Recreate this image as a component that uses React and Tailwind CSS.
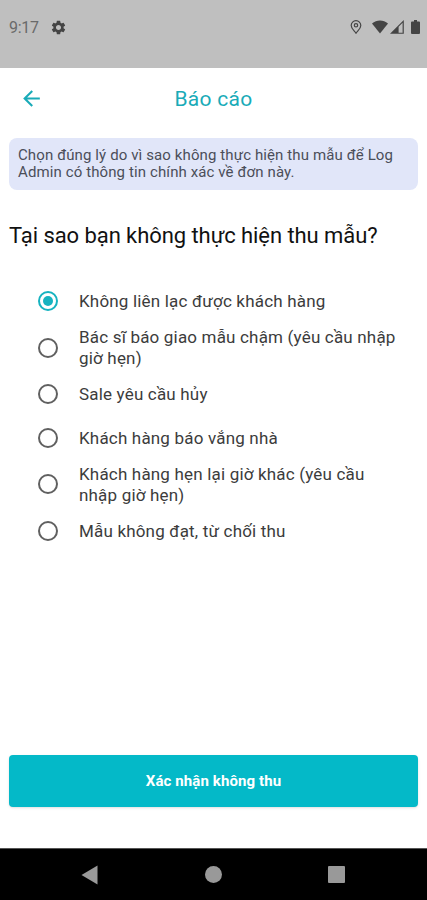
import React, { useState } from "react";
import clsx from "clsx";
import { MdArrowBack, MdSettings } from "react-icons/md";

const reasons = [
  { id: "unreachable", lines: ["Không liên lạc được khách hàng"] },
  {
    id: "doctor-delay",
    lines: ["Bác sĩ báo giao mẫu chậm (yêu cầu nhập", "giờ hẹn)"],
  },
  { id: "sale-cancel", lines: ["Sale yêu cầu hủy"] },
  { id: "not-home", lines: ["Khách hàng báo vắng nhà"] },
  {
    id: "reschedule",
    lines: ["Khách hàng hẹn lại giờ khác (yêu cầu", "nhập giờ hẹn)"],
  },
  { id: "rejected", lines: ["Mẫu không đạt, từ chối thu"] },
];

function StatusBar() {
  return (
    <div className="h-[67.5px] shrink-0 bg-[#bfbfbf] flex items-start justify-between pl-[9px] pr-[7.500px] pt-[18px] text-[#444]">
      <div className="flex items-center h-5">
        <span className="text-[16px] tracking-[-0.3px] text-[#6a6a6a]">
          9:17
        </span>
        <MdSettings className="ml-[11px] -mt-0.5 size-[17px]" />
      </div>
      <div className="flex items-center h-[18px]">
        <svg viewBox="0 0 12 14" className="w-3 h-3.5" fill="none" stroke="currentColor" strokeWidth="1.200">
          <path d="M6 13.200C4.600 10.800 1.200 8.800 1.200 5.500a4.800 4.800 0 0 1 9.600 0C10.800 8.800 7.400 10.800 6 13.200z" />
          <circle cx="6" cy="5.300" r="1.700" />
        </svg>
        <svg viewBox="0 0 16 14" className="ml-[10px] w-4 h-3.5" fill="currentColor">
          <path d="M0 3.500C4.600-.4 11.400-.4 16 3.500L8 13.500z" />
        </svg>
        <svg viewBox="0 0 14 14" className="ml-0.5 w-3.5 h-3.5" fill="currentColor">
          <path d="M0 13.800 13.800 0v13.800zM8.600 6.700v6h4V2.700z" fillRule="evenodd" />
        </svg>
        <svg viewBox="0 0 9 14" className="ml-[7px] w-[9px] h-3.5" fill="currentColor">
          <path d="M3 0h3v1.500h2q1 0 1 1V13q0 1-1 1H1q-1 0-1-1V2.500q0-1 1-1h2z" />
        </svg>
      </div>
    </div>
  );
}

function Header() {
  return (
    <header className="h-[62px] shrink-0 grid grid-cols-[62px_1fr_62px] items-center text-[#1aabb8]">
      <button className="flex justify-center" aria-label="Back">
        <MdArrowBack className="size-[25px]" />
      </button>
      <h1 className="pt-[2px] text-center text-[21px] tracking-[0.3px]">
        Báo cáo
      </h1>
    </header>
  );
}

function Radio({ checked }) {
  return (
    <span
      className={clsx(
        "-mt-px size-5 shrink-0 rounded-full border-2 flex items-center justify-center",
        checked ? "border-[#16b3c0]" : "border-[#606060]",
      )}
    >
      {checked && <span className="size-2.5 rounded-full bg-[#16b3c0]" />}
    </span>
  );
}

function NavigationBar() {
  return (
    <nav className="h-[52px] shrink-0 bg-black border-t border-[#555] grid grid-cols-[81px_18px_106px_18px_105px_18px] items-center text-[#999]">
      <svg viewBox="0 0 17 20" className="col-start-2 w-[17px] h-5" fill="currentColor">
        <path d="M0.500 10 16.500 0.500v19z" />
      </svg>
      <span className="col-start-4 size-[17px] rounded-full bg-[#999]" />
      <span className="col-start-6 size-[17px] rounded-[1px] bg-[#999]" />
    </nav>
  );
}

export default function App() {
  const [selected, setSelected] = useState("unreachable");

  return (
    <div className="h-screen flex flex-col bg-white font-['Roboto',sans-serif]">
      <StatusBar />
      <Header />
      <main className="flex-1 flex flex-col px-[9px] pt-2">
        <p className="h-[52px] rounded-lg bg-[#e1e6f9] px-[9px] pt-[9.500px] text-[15px] leading-[17px] tracking-[0.11px] text-[#4b4e59] whitespace-nowrap">
          Chọn đúng lý do vì sao không thực hiện thu mẫu để Log
          <br />
          Admin có thông tin chính xác về đơn này.
        </p>
        <h2 className="mt-8 text-[22px] leading-7 tracking-[-0.07px] text-[#111] whitespace-nowrap">
          Tại sao bạn không thực hiện thu mẫu?
        </h2>
        <div className="mt-[30.500px] pl-[29px]" role="radiogroup">
          {reasons.map((reason) => (
            <div
              key={reason.id}
              role="radio"
              aria-checked={selected === reason.id}
              onClick={() => setSelected(reason.id)}
              className={clsx(
                "flex items-center gap-[21px] text-[17px] leading-[21px] tracking-[0.18px] text-[#3c3c3c] whitespace-nowrap",
                reason.lines.length > 1 ? "h-[50px]" : "h-[43.3px]",
              )}
            >
              <Radio checked={selected === reason.id} />
              <span>
                {reason.lines.map((line) => (
                  <span key={line} className="block">
                    {line}
                  </span>
                ))}
              </span>
            </div>
          ))}
        </div>
        <button className="mt-auto mb-[41px] h-[52px] w-full rounded-[4px] bg-[#04b9c8] text-[15px] font-bold tracking-[0.1px] text-white shadow-sm">
          Xác nhận không thu
        </button>
      </main>
      <NavigationBar />
    </div>
  );
}
